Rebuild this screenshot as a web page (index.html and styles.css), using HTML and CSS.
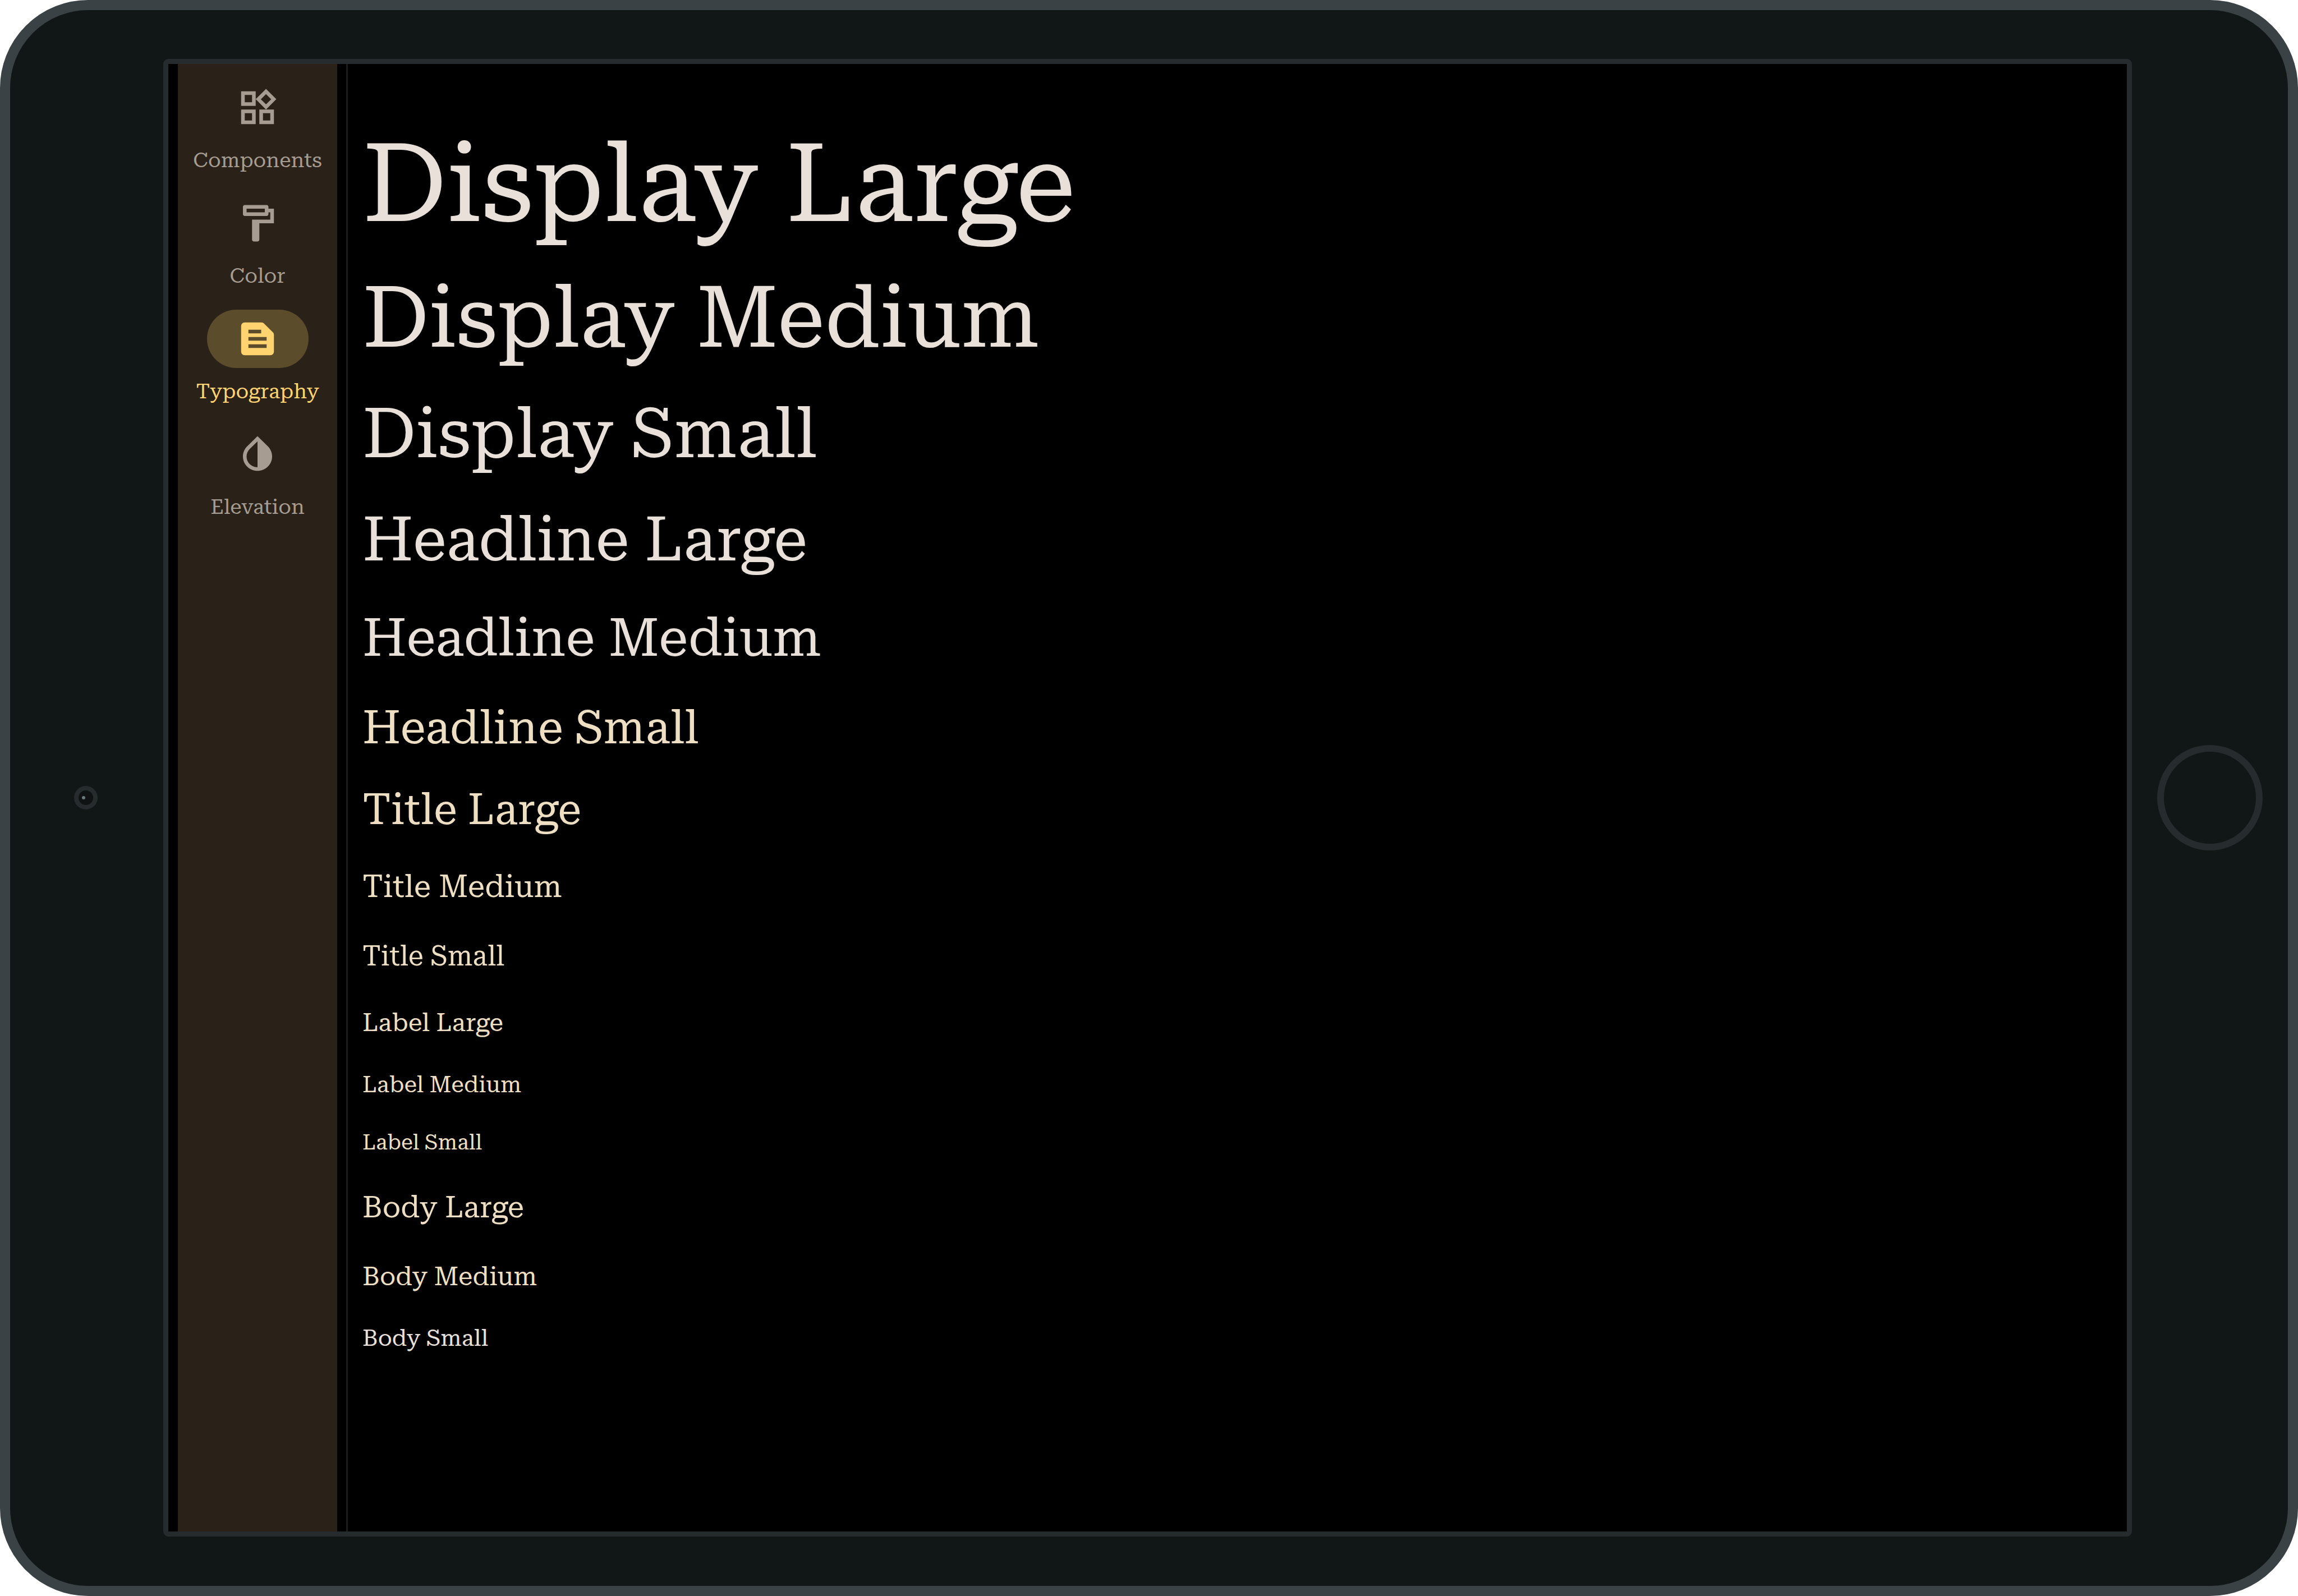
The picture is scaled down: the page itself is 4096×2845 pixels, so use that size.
FILE: index.html
```html
<!DOCTYPE html>
<html lang="en">
<head>
<meta charset="utf-8">
<meta name="viewport" content="width=device-width, initial-scale=1">
<title>Typography</title>
<link rel="stylesheet" href="styles.css">
</head>
<body>
<div class="tablet">
  <div class="bezel bezel-left"><span class="camera"><span class="lens"></span></span></div>
  <div class="screen">
    <nav class="rail">
      <a class="rail-item" href="#components">
        <span class="indicator"><svg class="icon" viewBox="0 0 24 24" aria-hidden="true"><path d="M16.66 4.52l2.83 2.83-2.83 2.83-2.83-2.83 2.83-2.83M9 5v4H5V5h4m10 10v4h-4v-4h4M9 15v4H5v-4h4m7.66-13.34L11 7.34 16.66 13l5.66-5.66-5.66-5.68zM11 3H3v8h8V3zm10 10h-8v8h8v-8zm-10 0H3v8h8v-8z"/></svg></span>
        <span class="rail-label">Components</span>
      </a>
      <a class="rail-item" href="#color">
        <span class="indicator"><svg class="icon" viewBox="0 0 24 24" aria-hidden="true"><path d="M18 4V3c0-.55-.45-1-1-1H5c-.55 0-1 .45-1 1v4c0 .55.45 1 1 1h12c.55 0 1-.45 1-1V6h1v4H9v11c0 .55.45 1 1 1h2c.55 0 1-.45 1-1v-9h8V4h-3zm-2 2H6V4h10v2z"/></svg></span>
        <span class="rail-label">Color</span>
      </a>
      <a class="rail-item selected" href="#typography" aria-current="page">
        <span class="indicator"><svg class="icon" viewBox="0 0 24 24" aria-hidden="true"><path d="M20.41 8.41l-4.83-4.83c-.37-.37-.88-.58-1.41-.58H5c-1.1 0-2 .9-2 2v14c0 1.1.9 2 2 2h14c1.1 0 2-.9 2-2V9.83c0-.53-.21-1.04-.59-1.42zM7 7h7v2H7V7zm10 10H7v-2h10v2zm0-4H7v-2h10v2z"/></svg></span>
        <span class="rail-label">Typography</span>
      </a>
      <a class="rail-item" href="#elevation">
        <span class="indicator"><svg class="icon" viewBox="0 0 24 24" aria-hidden="true"><path d="M12 4.81V19c-3.31 0-6-2.63-6-5.87 0-1.56.62-3.03 1.75-4.14L12 4.81M12 2L6.35 7.56C4.9 8.99 4 10.96 4 13.13 4 17.48 7.58 21 12 21s8-3.52 8-7.87c0-2.17-.9-4.14-2.35-5.57L12 2z"/></svg></span>
        <span class="rail-label">Elevation</span>
      </a>
    </nav>
    <main class="type-list">
      <p class="display-large">Display Large</p>
      <p class="display-medium">Display Medium</p>
      <p class="display-small">Display Small</p>
      <p class="headline-large">Headline Large</p>
      <p class="headline-medium">Headline Medium</p>
      <p class="headline-small accent">Headline Small</p>
      <p class="title-large accent">Title Large</p>
      <p class="title-medium accent">Title Medium</p>
      <p class="title-small accent">Title Small</p>
      <p class="label-large accent">Label Large</p>
      <p class="label-medium accent">Label Medium</p>
      <p class="label-small accent">Label Small</p>
      <p class="body-large accent">Body Large</p>
      <p class="body-medium accent">Body Medium</p>
      <p class="body-small">Body Small</p>
    </main>
  </div>
  <div class="bezel"><span class="home"></span></div>
</div>
</body>
</html>
```
FILE: styles.css
```css
* { box-sizing: border-box; }

body {
  margin: 0;
  background: #fff;
  font-family: "Roboto Serif", "DejaVu Serif", serif;
}

/* Device frame */
.tablet {
  display: grid;
  grid-template-columns: 273px 1fr 278px;
  min-height: 100vh;
  padding: 87px 0 88px;
  border: 18px solid #3b4245;
  border-radius: 157px;
  background: #111617;
}

.bezel {
  display: flex;
  align-items: center;
  justify-content: center;
}

.bezel-left { padding-right: 4px; }

.camera {
  display: flex;
  align-items: center;
  width: 42px;
  height: 42px;
  padding-left: 6px;
  border: 8px solid #262b2d;
  border-radius: 50%;
  background: #0f1314;
}

.lens {
  width: 6px;
  height: 6px;
  border-radius: 50%;
  background: #6b797c;
}

.home {
  width: 188px;
  height: 188px;
  border: 12px solid #262b2d;
  border-radius: 50%;
}

.screen {
  display: flex;
  padding-left: 17px;
  border: 9px solid #262b2d;
  border-radius: 9px;
  background: #000;
}

/* Navigation rail */
.rail {
  display: flex;
  flex: 0 0 284px;
  flex-direction: column;
  gap: 34px;
  margin-right: 16px;
  padding-top: 26px;
  background: #2a2218;
}

.rail-item {
  display: flex;
  flex-direction: column;
  align-items: center;
  gap: 16px;
  color: #a69c91;
  text-decoration: none;
}

.indicator {
  display: flex;
  align-items: center;
  justify-content: center;
  width: 181px;
  height: 104px;
  border-radius: 52px;
}

.icon {
  width: 78px;
  height: 78px;
  fill: currentColor;
}

.rail-label {
  font-size: 37px;
  line-height: 52px;
}

.selected { color: #ffd370; }
.selected .indicator { background: #5b4c2b; }

/* Type scale */
.type-list {
  display: flex;
  flex: 1;
  flex-direction: column;
  gap: 52px;
  padding: 111px 26px;
  border-left: 3px solid #1b1b1b;
  color: #e9e1d9;
}

.type-list p { margin: 0; }
.type-list .accent { color: #eedfc2; }

.display-large { font-size: 194px; line-height: 206px; }
.display-medium { font-size: 153px; line-height: 166px; }
.display-small { font-size: 123px; line-height: 144px; }
.headline-large { font-size: 109px; line-height: 130px; }
.headline-medium { font-size: 95px; line-height: 116px; }
.headline-small { font-size: 82px; line-height: 100px; }
.title-large { font-size: 76px; line-height: 90px; }
.title-medium { font-size: 55px; line-height: 78px; }
.title-small { font-size: 49px; line-height: 68px; }
.label-large { font-size: 45px; line-height: 64px; }
.label-medium { font-size: 41px; line-height: 52px; }
.label-small { font-size: 38px; line-height: 50px; }
.body-large { font-size: 53px; line-height: 78px; }
.body-medium { font-size: 46px; line-height: 64px; }
.body-small { font-size: 41px; line-height: 52px; }
```
